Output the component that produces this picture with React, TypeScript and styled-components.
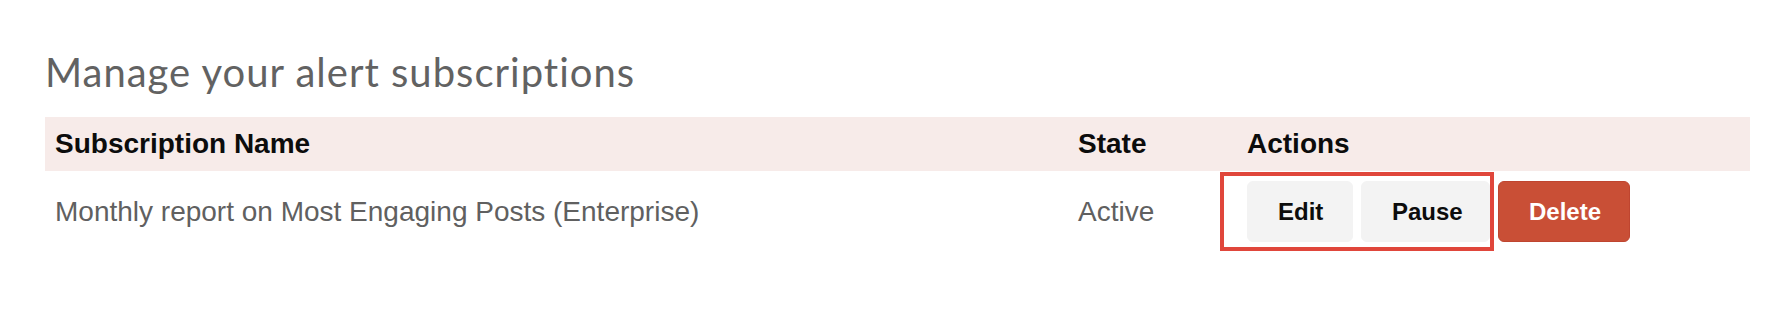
import React from "react";
import styled, { createGlobalStyle } from "styled-components";

const GlobalStyle = createGlobalStyle`
  body {
    margin: 0;
    background: #ffffff;
    font-family: "Liberation Sans", Arial, sans-serif;
  }
`;

const Page = styled.div`
  padding: 48px 30px 0 45px;
  min-height: 322px;
  box-sizing: border-box;
`;

const Heading = styled.h1`
  margin: 0 0 21px 0;
  font-family: Lato, "Open Sans", sans-serif;
  font-weight: 400;
  font-size: 40px;
  line-height: 48px;
  color: #626262;
  letter-spacing: 1px;
`;

const Table = styled.div`
  width: 1705px;
`;

const Row = styled.div<{ $head?: boolean }>`
  display: grid;
  grid-template-columns: 1023px 169px 1fr;
  align-items: center;
  height: ${(p) => (p.$head ? "54px" : "81px")};
  background: ${(p) => (p.$head ? "#f7ebe9" : "transparent")};
`;

const Cell = styled.div<{ $head?: boolean }>`
  padding-left: 10px;
  font-size: 28px;
  font-weight: ${(p) => (p.$head ? 700 : 400)};
  color: ${(p) => (p.$head ? "#0c0c0c" : "#606060")};
`;

const Actions = styled.div`
  position: relative;
  display: flex;
  gap: 8px;
  padding-left: 10px;
`;

const Highlight = styled.div`
  position: absolute;
  left: -17px;
  top: -9px;
  width: 274px;
  height: 79px;
  box-sizing: border-box;
  border: 4px solid #e0463b;
  pointer-events: none;
`;

const Button = styled.button<{ $danger?: boolean }>`
  height: 61px;
  padding: 0 30px;
  border-radius: 6px;
  border: 1px solid ${(p) => (p.$danger ? "#bf4530" : "#f3f3f3")};
  background: ${(p) => (p.$danger ? "#c94f36" : "#f3f3f3")};
  color: ${(p) => (p.$danger ? "#ffffff" : "#0c0c0c")};
  font-family: "Liberation Sans", Arial, sans-serif;
  font-size: 24px;
  font-weight: 700;
  cursor: pointer;
`;

type Subscription = {
  id: number;
  name: string;
  state: string;
};

const subscriptions: Subscription[] = [
  { id: 1, name: "Monthly report on Most Engaging Posts (Enterprise)", state: "Active" },
];

const App = () => {
  return (
    <>
      <GlobalStyle />
      <Page>
        <Heading>Manage your alert subscriptions</Heading>
        <Table>
          <Row $head>
            <Cell $head>Subscription Name</Cell>
            <Cell $head>State</Cell>
            <Cell $head>Actions</Cell>
          </Row>
          {subscriptions.map((s) => (
            <Row key={s.id}>
              <Cell>{s.name}</Cell>
              <Cell>{s.state}</Cell>
              <Actions>
                <Highlight />
                <Button style={{ width: 106 }}>Edit</Button>
                <Button style={{ width: 129 }}>Pause</Button>
                <Button $danger style={{ width: 132 }}>
                  Delete
                </Button>
              </Actions>
            </Row>
          ))}
        </Table>
      </Page>
    </>
  );
};

export default App;
